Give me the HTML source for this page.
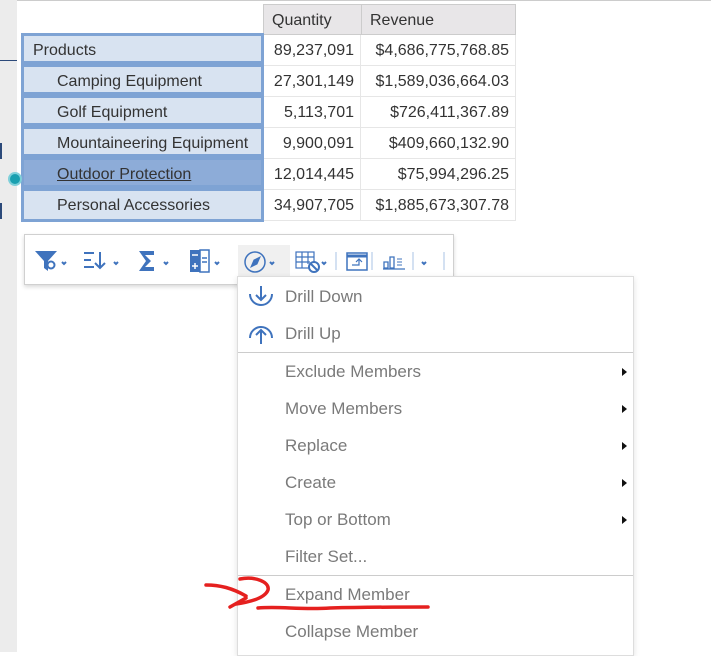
<!DOCTYPE html><html><head><style>
body{margin:0;width:711px;height:652px;overflow:hidden;background:#fff;font-family:"Liberation Sans",Arial,sans-serif;position:relative}
.a{position:absolute}
.cell{position:absolute;height:31px;line-height:31px;font-size:16px;color:#333;box-sizing:border-box;border-right:1px solid #e6e6e6;border-bottom:1px solid #e6e6e6;text-align:right;padding-right:6px}
.hd{background:#e8e6e8;border:1px solid #ccc;text-align:left;padding-left:8px}
.lab{position:absolute;left:21px;width:243px;height:31px;box-sizing:border-box;border:3px solid #7ea3d4;background:#d8e3f1;font-size:16px;line-height:29px;color:#333}
.mi{position:absolute;left:285px;font-size:17px;color:#7a7a7a}
.ar{position:absolute;left:622px;width:0;height:0;border-left:5px solid #111;border-top:4px solid transparent;border-bottom:4px solid transparent}
</style></head><body>
<div class="a" style="left:0;top:0;width:17px;height:652px;background:#ececec"></div>
<div class="a" style="left:17px;top:0;width:694px;height:1px;background:#ccc"></div>
<div class="a" style="left:0;top:60px;width:17px;height:1px;background:#2c4a7a"></div>
<div class="a" style="left:0;top:143px;width:2px;height:16px;background:#2c4a7a"></div>
<div class="a" style="left:0;top:203px;width:2px;height:16px;background:#2c4a7a"></div>

<div class="cell hd" style="left:263px;top:4px;width:99px">Quantity</div>
<div class="cell hd" style="left:361px;top:4px;width:155px">Revenue</div>

<div class="cell" style="left:263px;top:35px;width:98px">89,237,091</div><div class="cell" style="left:361px;top:35px;width:155px">$4,686,775,768.85</div>
<div class="cell" style="left:263px;top:66px;width:98px">27,301,149</div><div class="cell" style="left:361px;top:66px;width:155px">$1,589,036,664.03</div>
<div class="cell" style="left:263px;top:97px;width:98px">5,113,701</div><div class="cell" style="left:361px;top:97px;width:155px">$726,411,367.89</div>
<div class="cell" style="left:263px;top:128px;width:98px">9,900,091</div><div class="cell" style="left:361px;top:128px;width:155px">$409,660,132.90</div>
<div class="cell" style="left:263px;top:159px;width:98px">12,014,445</div><div class="cell" style="left:361px;top:159px;width:155px">$75,994,296.25</div>
<div class="cell" style="left:263px;top:190px;width:98px">34,907,705</div><div class="cell" style="left:361px;top:190px;width:155px">$1,885,673,307.78</div>

<div class="lab" style="top:33px;padding-left:9px">Products</div>
<div class="lab" style="top:64px;padding-left:33px">Camping Equipment</div>
<div class="lab" style="top:95px;padding-left:33px">Golf Equipment</div>
<div class="lab" style="top:126px;padding-left:33px">Mountaineering Equipment</div>
<div class="lab" style="top:157px;padding-left:33px;background:#8dacd8;text-decoration:underline">Outdoor Protection</div>
<div class="lab" style="top:188px;padding-left:33px;height:34px">Personal Accessories</div>
<div class="a" style="left:8px;top:172px;width:14px;height:14px;border-radius:50%;background:#1aa0b0;border:2px solid #7fd0da;box-sizing:border-box"></div>

<div class="a" style="left:24px;top:234px;width:430px;height:51px;border:1px solid #d0d0d0;box-shadow:0 2px 4px rgba(0,0,0,.15);background:#fff;box-sizing:border-box"></div>
<div class="a" style="left:238px;top:245px;width:52px;height:32px;background:#f0f0f0"></div>
<svg class="a" style="left:34px;top:248px" width="420" height="28" viewBox="0 0 420 28" fill="none" stroke="#3f73bd" stroke-width="2">
<path d="M1 3h22l-9 10v10l-4-3v-7z" fill="#3f73bd" stroke="none"/><circle cx="17" cy="17" r="3.5" fill="#fff"/>
<path d="M28 14l2 2 2-2M50 5h10M50 12h7M50 19h10M66 4v16M61 15l5 5 5-5M80 14l2 2 2-2"/>
<path d="M105 3h15v4h-9l6 6-6 6h9v4h-15l7-10z" fill="#3f73bd" stroke="none"/><path d="M130 14l2 2 2-2"/>
<rect x="156" y="2" width="10" height="22" fill="#3f73bd" stroke="none"/><rect x="166" y="2" width="9" height="22" stroke-width="1.5"/>
<path d="M158 7h6M158 18h6M161 15v6" stroke="#fff" stroke-width="1.5"/><path d="M168 10h5M168 14h5" stroke-width="1.5"/>
<path d="M181 14l2 2 2-2"/>
<circle cx="221" cy="14" r="10" stroke-width="1.5"/><path d="M226 9l-3 7-6 3 3-7z" fill="#3f73bd" stroke-width="1"/>
<path d="M236 14l2 2 2-2"/>
<rect x="262" y="4" width="18" height="16" stroke-width="1.2"/><path d="M262 9h18M262 14h14M268 4v16M274 4v12" stroke-width="1.2"/>
<circle cx="280" cy="19" r="5" fill="#fff" stroke-width="2"/><path d="M277 16l6 6" stroke-width="2"/>
<path d="M288 14l2 2 2-2"/>
<path d="M302 4v18M338 4v18M379 4v18M410 4v18" stroke="#a8c3e6" stroke-width="1"/>
<rect x="313" y="5" width="20" height="17" stroke-width="1.5"/><path d="M313 8h20" stroke-width="3"/><path d="M318 17h7v-6M322 14l3-3 3 3" stroke-width="1.2"/>
<path d="M349 21h22M350 14h4v6h-4zM356 9h4v11h-4z" stroke-width="1.3"/><path d="M363 11h5M363 14h5M363 17h5" stroke-width="1"/><path d="M388 14l2 2 2-2"/>
</svg>

<div class="a" style="left:237px;top:276px;width:397px;height:380px;border:1px solid #ddd;box-shadow:0 2px 6px rgba(0,0,0,.12);background:#fff;box-sizing:border-box"></div>
<svg class="a" style="left:247px;top:284px" width="30" height="70" viewBox="0 0 30 70" fill="none" stroke="#3f73bd" stroke-width="2">
<path d="M3 10a11 11 0 0 0 22 0M14 2v14M9 11l5 5 5-5"/>
<path d="M3 54a11 11 0 0 1 22 0M14 60v-14M9 51l5-5 5 5"/>
</svg>
<div class="mi" style="top:287px">Drill Down</div>
<div class="mi" style="top:324px">Drill Up</div>
<div class="a" style="left:238px;top:352px;width:395px;height:1px;background:#ccc"></div>
<div class="mi" style="top:362px">Exclude Members</div><div class="ar" style="top:368px"></div>
<div class="mi" style="top:399px">Move Members</div><div class="ar" style="top:405px"></div>
<div class="mi" style="top:436px">Replace</div><div class="ar" style="top:442px"></div>
<div class="mi" style="top:473px">Create</div><div class="ar" style="top:479px"></div>
<div class="mi" style="top:510px">Top or Bottom</div><div class="ar" style="top:516px"></div>
<div class="mi" style="top:547px">Filter Set...</div>
<div class="a" style="left:238px;top:575px;width:395px;height:1px;background:#ccc"></div>
<div class="mi" style="top:585px">Expand Member</div>
<div class="mi" style="top:622px">Collapse Member</div>
<svg class="a" style="left:200px;top:570px" width="240" height="50" viewBox="0 0 240 50" fill="none" stroke="#e5201f" stroke-width="3.5" stroke-linecap="round" stroke-linejoin="round">
<path d="M6 15C20 15 32 18 46 26"/>
<path d="M40 9C55 6 70 12 68 20C65 28 50 32 36 34"/>
<path d="M30 37L46 28"/>
<path d="M58 38C80 36 100 40 130 38C170 37 200 37 228 37"/>
</svg>
</body></html>
